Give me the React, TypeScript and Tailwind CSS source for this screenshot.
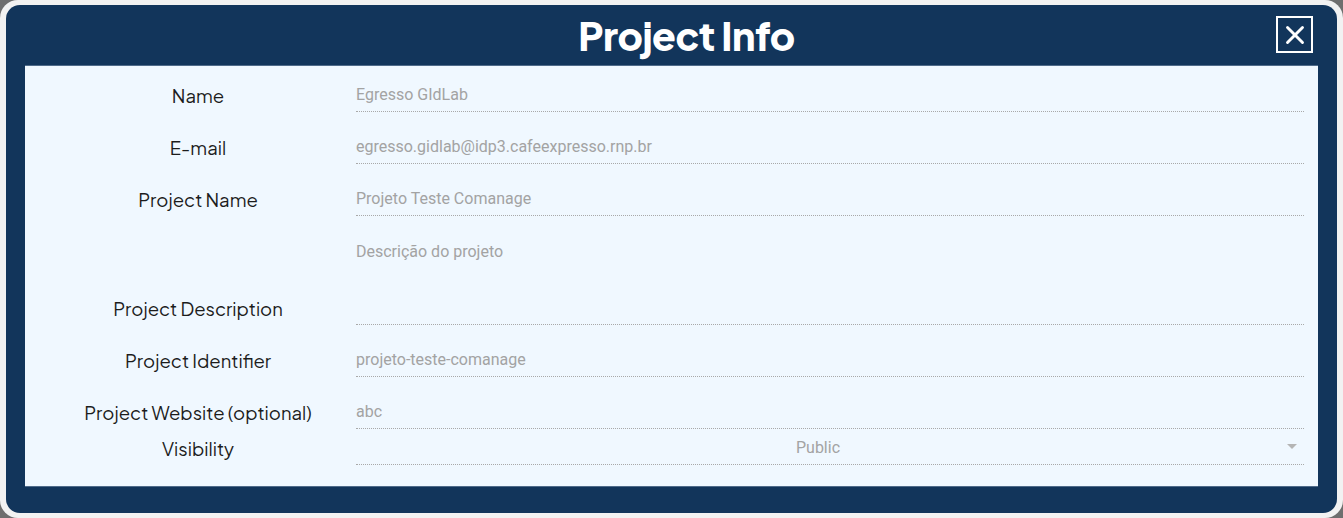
import { X } from "lucide-react";

type Field = {
  label: string;
  value: string;
  tall?: boolean;
};

const fields: Field[] = [
  { label: "Name", value: "Egresso GIdLab" },
  { label: "E-mail", value: "egresso.gidlab@idp3.cafeexpresso.rnp.br" },
  { label: "Project Name", value: "Projeto Teste Comanage" },
  { label: "Project Description", value: "Descrição do projeto", tall: true },
  { label: "Project Identifier", value: "projeto-teste-comanage" },
  { label: "Project Website (optional)", value: "abc" },
];

const labelFont = "font-['Plus_Jakarta_Sans','Inter',sans-serif]";

const Row = ({ field }: { field: Field }) => (
  <div className="flex items-end">
    <div
      className={`w-[331px] shrink-0 pl-[15px] pb-[4px] text-center text-[18.5px] leading-6 text-[#1c1c1c] ${labelFont}`}
    >
      {field.label}
    </div>
    <div
      className={`flex-1 border-b border-dotted border-[#a9a9a9] text-[16px] leading-6 text-[#a3a3a3] font-['Roboto',sans-serif] ${
        field.tall ? "h-[93px] pt-[8px]" : "h-[36px] pt-[7px]"
      }`}
    >
      {field.value}
    </div>
  </div>
);

export default function App() {
  return (
    <div className="h-[518px] w-full bg-[#6e6e6e]">
      <div className="h-full rounded-[18px] bg-[#f2f2f2] px-[6px] pt-[5px] pb-[5px]">
        <div className="flex h-full flex-col rounded-[14px] bg-[#12355b] px-[19px] pb-[26px]">
          <div className="relative flex h-[60px] items-center justify-center pl-[30px]">
            <h1 className="text-[39px] font-extrabold leading-none tracking-[-0.5px] text-white font-['Plus_Jakarta_Sans','Inter',sans-serif]">
              Project Info
            </h1>
            <button className="absolute right-[5px] top-[11px] flex h-[37px] w-[37px] items-center justify-center border-2 border-white text-white">
              <X size={30} strokeWidth={2.3} />
            </button>
          </div>
          <div className="flex flex-1 flex-col border-y border-[#4f6b8a] bg-[#f0f8ff] pt-[10px] pb-[21px] pr-[14px]">
            <div className="flex flex-col gap-4">
              {fields.map((f) => (
                <Row key={f.label} field={f} />
              ))}
            </div>
            <div className="flex items-end">
              <div
                className={`w-[331px] shrink-0 pl-[15px] pb-[4px] text-center text-[18.5px] leading-6 text-[#1c1c1c] ${labelFont}`}
              >
                Visibility
              </div>
              <div className="relative flex h-[36px] flex-1 justify-center border-b border-dotted border-[#a9a9a9] pt-[7px] pr-6 text-[16px] leading-6 text-[#a3a3a3] font-['Roboto',sans-serif]">
                Public
                <svg
                  className="absolute right-[7px] top-[15px]"
                  width="10"
                  height="5"
                  viewBox="0 0 10 5"
                >
                  <path d="M0 0h10L5 5z" fill="#b5b5b5" />
                </svg>
              </div>
            </div>
          </div>
        </div>
      </div>
    </div>
  );
}
